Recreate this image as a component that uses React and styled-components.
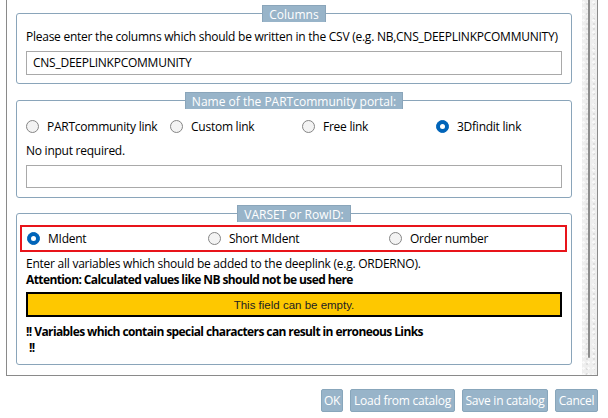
import React from "react";
import styled, { createGlobalStyle } from "styled-components";

const Global = createGlobalStyle`
  html, body { margin: 0; padding: 0; background: #ffffff; }
  body {
    font-family: "Open Sans", "Noto Sans", "Liberation Sans", sans-serif;
    font-size: 12px;
    letter-spacing: -0.25px;
    color: #000;
  }
  * { box-sizing: border-box; }
`;

const Page = styled.div`
  width: 608px;
  height: 418px;
  padding: 0 10px 0 6px;
  overflow: hidden;
`;

const Frame = styled.div`
  display: flex;
  border: 1px solid #8a8a8a;
  border-top: none;
  width: 592px;
`;

const Content = styled.div`
  flex: 1;
  min-width: 0;
  padding: 5px 10px 10px 9px;
  display: flex;
  flex-direction: column;
`;

const Scrollbar = styled.div`
  width: 15px;
  flex: none;
  background: #eeeeee;
  background-image:
    radial-gradient(circle at 30% 40%, rgba(255,255,255,0.7) 0 1px, transparent 1.5px),
    radial-gradient(circle at 70% 80%, rgba(210,210,210,0.6) 0 1px, transparent 1.5px);
  background-size: 5px 6px, 7px 5px;
  display: flex;
  justify-content: center;
  padding-right: 1px;
`;

const Thumb = styled.div`
  width: 2px;
  height: 358px;
  background: #8c8c8c;
  border-radius: 0 0 1px 1px;
`;

const Group = styled.fieldset`
  margin: ${(p) => p.$mt || 0}px 0 0 0;
  padding: ${(p) => p.$pt}px 9px ${(p) => p.$pb}px 9px;
  border: 1px solid #8aa5ba;
  border-radius: 3px;
  min-inline-size: 0;
  min-width: 0;
  display: flex;
  flex-direction: column;
`;

const Legend = styled.legend`
  margin: 0 auto;
  padding: 0 6px;
  height: 17px;
  line-height: 17px;
  background: #98b4c9;
  color: #ffffff;
  border: 1px solid #8aa5ba;
  border-bottom: none;
  font-size: 12px;
  letter-spacing: 0;
`;

const Text = styled.div`
  line-height: 16px;
  white-space: nowrap;
  margin-top: ${(p) => p.$mt || 0}px;
  padding-left: ${(p) => p.$pl || 0}px;
  font-weight: ${(p) => (p.$bold ? 700 : 400)};
  letter-spacing: ${(p) => (p.$bold ? "-0.6px" : "-0.25px")};
`;

const Input = styled.div`
  margin-top: ${(p) => p.$mt || 0}px;
  height: ${(p) => p.$h}px;
  border: 1px solid #a9a9a9;
  background: #fff;
  padding: 0 6px;
  line-height: ${(p) => p.$h - 2}px;
  white-space: nowrap;
`;

const RadioGrid = styled.div`
  display: grid;
  grid-template-columns: ${(p) => p.$cols};
  align-items: center;
  flex: 1;
`;

const Highlight = styled.div`
  margin: 0 -5px 0 -6px;
  height: 27px;
  border: 2px solid #e8141a;
  padding-left: 5px;
  display: flex;
  align-items: center;
`;

const RadioItem = styled.label`
  display: flex;
  align-items: center;
  gap: 8px;
  height: 20px;
  white-space: nowrap;
`;

const Circle = styled.span`
  width: 13px;
  height: 13px;
  border-radius: 50%;
  flex: none;
  display: flex;
  align-items: center;
  justify-content: center;
  background: ${(p) => (p.$on ? "#0064b9" : "#f3f3f3")};
  border: 1px solid ${(p) => (p.$on ? "#0064b9" : "#858585")};
  &::after {
    content: "";
    display: ${(p) => (p.$on ? "block" : "none")};
    width: 5px;
    height: 5px;
    border-radius: 50%;
    background: #fff;
  }
`;

const Notice = styled.div`
  margin-top: 4px;
  height: 25px;
  border: 2px solid #000;
  background: #fec800;
  display: flex;
  align-items: center;
  justify-content: center;
  font-family: "Liberation Sans", Arial, sans-serif;
  font-size: 11.5px;
  letter-spacing: 0;
  color: #222;
`;

const Buttons = styled.div`
  display: flex;
  justify-content: flex-end;
  gap: 7px;
  margin-top: 13px;
  width: 592px;
`;

const Button = styled.button`
  height: 23px;
  width: ${(p) => p.$w}px;
  padding: 0;
  border: 1px solid #88a6bb;
  border-radius: 2px;
  background: #98b4c9;
  color: #ffffff;
  font-family: inherit;
  font-size: 12px;
  letter-spacing: -0.25px;
  line-height: 21px;
  white-space: nowrap;
`;

const Radio = ({ on, children }) => (
  <RadioItem>
    <Circle $on={on} />
    <span>{children}</span>
  </RadioItem>
);

export default function App() {
  return (
    <Page>
      <Global />
      <Frame>
        <Content>
          <Group $pt={7} $pb={8}>
            <Legend>Columns</Legend>
            <Text>
              Please enter the columns which should be written in the CSV (e.g. NB,CNS_DEEPLINKPCOMMUNITY)
            </Text>
            <Input $mt={6} $h={24}>CNS_DEEPLINKPCOMMUNITY</Input>
          </Group>

          <Group $mt={8} $pt={7} $pb={9}>
            <Legend>Name of the PARTcommunity portal:</Legend>
            <RadioGrid $cols="144px 132px 134px 1fr">
              <Radio>PARTcommunity link</Radio>
              <Radio>Custom link</Radio>
              <Radio>Free link</Radio>
              <Radio on>3Dfindit link</Radio>
            </RadioGrid>
            <Text $mt={7}>No input required.</Text>
            <Input $mt={6} $h={23} />
          </Group>

          <Group $mt={7} $pt={3} $pb={8}>
            <Legend>VARSET or RowID:</Legend>
            <Highlight>
              <RadioGrid $cols="181px 181px 1fr">
                <Radio on>MIdent</Radio>
                <Radio>Short MIdent</Radio>
                <Radio>Order number</Radio>
              </RadioGrid>
            </Highlight>
            <Text $mt={4}>Enter all variables which should be added to the deeplink (e.g. ORDERNO).</Text>
            <Text $bold>Attention: Calculated values like NB should not be used here</Text>
            <Notice>This field can be empty.</Notice>
            <Text $bold $mt={7}>!! Variables which contain special characters can result in erroneous Links</Text>
            <Text $bold $pl={3}>!!</Text>
          </Group>
        </Content>
        <Scrollbar>
          <Thumb />
        </Scrollbar>
      </Frame>
      <Buttons>
        <Button $w={22}>OK</Button>
        <Button $w={105}>Load from catalog</Button>
        <Button $w={86}>Save in catalog</Button>
        <Button $w={43}>Cancel</Button>
      </Buttons>
    </Page>
  );
}
